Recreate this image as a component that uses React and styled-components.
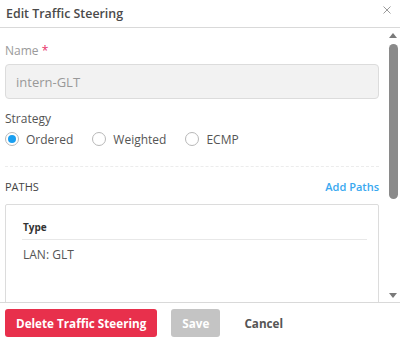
import React from 'react';
import styled, { createGlobalStyle } from 'styled-components';

const GlobalStyle = createGlobalStyle`
  html, body {
    margin: 0;
    padding: 0;
    background: #fff;
  }
  body {
    font-family: "Open Sans", "Liberation Sans", sans-serif;
    color: #555;
  }
`;

const Modal = styled.div`
  width: 400px;
  height: 341px;
  display: flex;
  flex-direction: column;
  background: #fff;
  overflow: hidden;
`;

const Header = styled.div`
  height: 27px;
  flex: none;
  display: flex;
  align-items: center;
  justify-content: space-between;
  padding: 0 6px;
  border-bottom: 1px solid #d9d9d9;
`;

const Title = styled.h2`
  margin: -1px 0 0;
  font-size: 12.4px;
  font-weight: 600;
  color: #4a4a4a;
`;

const Close = styled.button`
  border: 0;
  background: none;
  padding: 0;
  width: 10px;
  height: 10px;
  margin: -6px 1px 0 0;
  display: flex;
  cursor: pointer;
`;

const Body = styled.div`
  flex: 1;
  display: flex;
  min-height: 0;
`;

const Content = styled.div`
  flex: 1;
  overflow: hidden;
  padding: 15px 7px 12px 5px;
`;

const ScrollRail = styled.div`
  width: 14px;
  flex: none;
  display: flex;
  flex-direction: column;
  align-items: center;
`;

const ScrollArrow = styled.div`
  height: 14px;
  width: 100%;
  display: flex;
  align-items: center;
  justify-content: center;
`;

const ScrollTrack = styled.div`
  flex: 1;
  display: flex;
  justify-content: center;
  padding-top: 2px;
  margin-left: 1px;
`;

const ScrollThumb = styled.div`
  width: 9px;
  height: 155px;
  border-radius: 5px;
  background: #8a8a8a;
`;

const Label = styled.div`
  font-size: 12px;
  line-height: 16px;
  color: ${(p) => (p.$muted ? '#9a9a9a' : '#555')};
  margin-bottom: ${(p) => p.$gap || 0}px;
`;

const Required = styled.span`
  color: #e8306a;
`;

const Input = styled.input`
  box-sizing: border-box;
  display: block;
  width: 100%;
  height: 35px;
  padding: 0 10px;
  border: 1px solid #dcdcdc;
  border-radius: 4px;
  background: #f2f2f2;
  font-family: inherit;
  font-size: 13px;
  color: #999;
  outline: none;
  margin-bottom: 12px;
`;

const RadioRow = styled.div`
  display: flex;
  align-items: center;
  height: 20px;
  margin-top: 2px;
  gap: 19px;
`;

const RadioOption = styled.label`
  display: flex;
  align-items: center;
  gap: 7px;
  font-size: 12px;
  color: #555;
  cursor: pointer;
`;

const RadioCircle = styled.span`
  box-sizing: border-box;
  width: 14px;
  height: 14px;
  border-radius: 50%;
  border: 1px solid #b8b8b8;
  display: flex;
  align-items: center;
  justify-content: center;
  background: #fff;

  &::after {
    content: '';
    width: 8px;
    height: 8px;
    border-radius: 50%;
    background: ${(p) => (p.$checked ? '#1a9ff0' : 'transparent')};
  }
`;

const Divider = styled.hr`
  border: 0;
  border-top: 1px dashed #ececec;
  margin: 17px 0 11px;
`;

const SectionHead = styled.div`
  display: flex;
  justify-content: space-between;
  align-items: center;
  height: 16px;
  margin-bottom: 10px;
`;

const SectionTitle = styled.span`
  font-size: 11px;
  color: #444;
`;

const LinkButton = styled.button`
  border: 0;
  background: none;
  padding: 0;
  font-family: inherit;
  font-size: 11px;
  font-weight: 600;
  color: #38a8f0;
  cursor: pointer;
`;

const PathsBox = styled.div`
  border: 1px solid #dcdcdc;
  border-radius: 2px;
  height: 250px;
  padding: 15px 11px 0 16px;
`;

const TableHead = styled.div`
  font-size: 10px;
  font-weight: 700;
  color: #333;
  line-height: 14px;
  padding: 0 0 5px 1px;
  border-bottom: 1px solid #e8e8e8;
`;

const TableCell = styled.div`
  font-size: 12px;
  color: #555;
  padding: 7px 0 0 1px;
  line-height: 16px;
`;

const Footer = styled.div`
  flex: none;
  height: 38px;
  border-top: 1px solid #d9d9d9;
  display: flex;
  align-items: center;
  padding: 0 5px;
  gap: 14px;
`;

const Button = styled.button`
  height: 28px;
  border: 0;
  border-radius: 3px;
  padding: 0 ${(p) => p.$pad || 11}px;
  font-family: inherit;
  font-size: 11.7px;
  font-weight: 700;
  color: ${(p) => p.$color || '#fff'};
  background: ${(p) => p.$bg || 'transparent'};
  cursor: pointer;
  margin-top: 2px;
`;

function Arrow({ down }) {
  return (
    <svg width="8" height="5" viewBox="0 0 8 5">
      <path d={down ? 'M0 0 L8 0 L4 5 Z' : 'M0 5 L8 5 L4 0 Z'} fill="#7a7a7a" />
    </svg>
  );
}

export default function App() {
  return (
    <>
      <GlobalStyle />
      <Modal>
        <Header>
          <Title>Edit Traffic Steering</Title>
          <Close aria-label="close">
            <svg width="8" height="8" viewBox="0 0 8 8">
              <path d="M0.5 0.5 L7.5 7.5 M7.5 0.5 L0.5 7.5" stroke="#9a9a9a" strokeWidth="1" />
            </svg>
          </Close>
        </Header>
        <Body>
          <Content>
            <Label $muted $gap={5}>
              Name <Required>*</Required>
            </Label>
            <Input value="intern-GLT" readOnly />
            <Label>Strategy</Label>
            <RadioRow>
              <RadioOption>
                <RadioCircle $checked />
                Ordered
              </RadioOption>
              <RadioOption>
                <RadioCircle />
                Weighted
              </RadioOption>
              <RadioOption>
                <RadioCircle />
                ECMP
              </RadioOption>
            </RadioRow>
            <Divider />
            <SectionHead>
              <SectionTitle>PATHS</SectionTitle>
              <LinkButton>Add Paths</LinkButton>
            </SectionHead>
            <PathsBox>
              <TableHead>Type</TableHead>
              <TableCell>LAN: GLT</TableCell>
            </PathsBox>
          </Content>
          <ScrollRail>
            <ScrollArrow>
              <Arrow />
            </ScrollArrow>
            <ScrollTrack>
              <ScrollThumb />
            </ScrollTrack>
            <ScrollArrow>
              <Arrow down />
            </ScrollArrow>
          </ScrollRail>
        </Body>
        <Footer>
          <Button $bg="#e8304c">Delete Traffic Steering</Button>
          <Button $bg="#c4c4c4" $pad={11}>Save</Button>
          <Button $color="#555" $pad={10}>Cancel</Button>
        </Footer>
      </Modal>
    </>
  );
}
